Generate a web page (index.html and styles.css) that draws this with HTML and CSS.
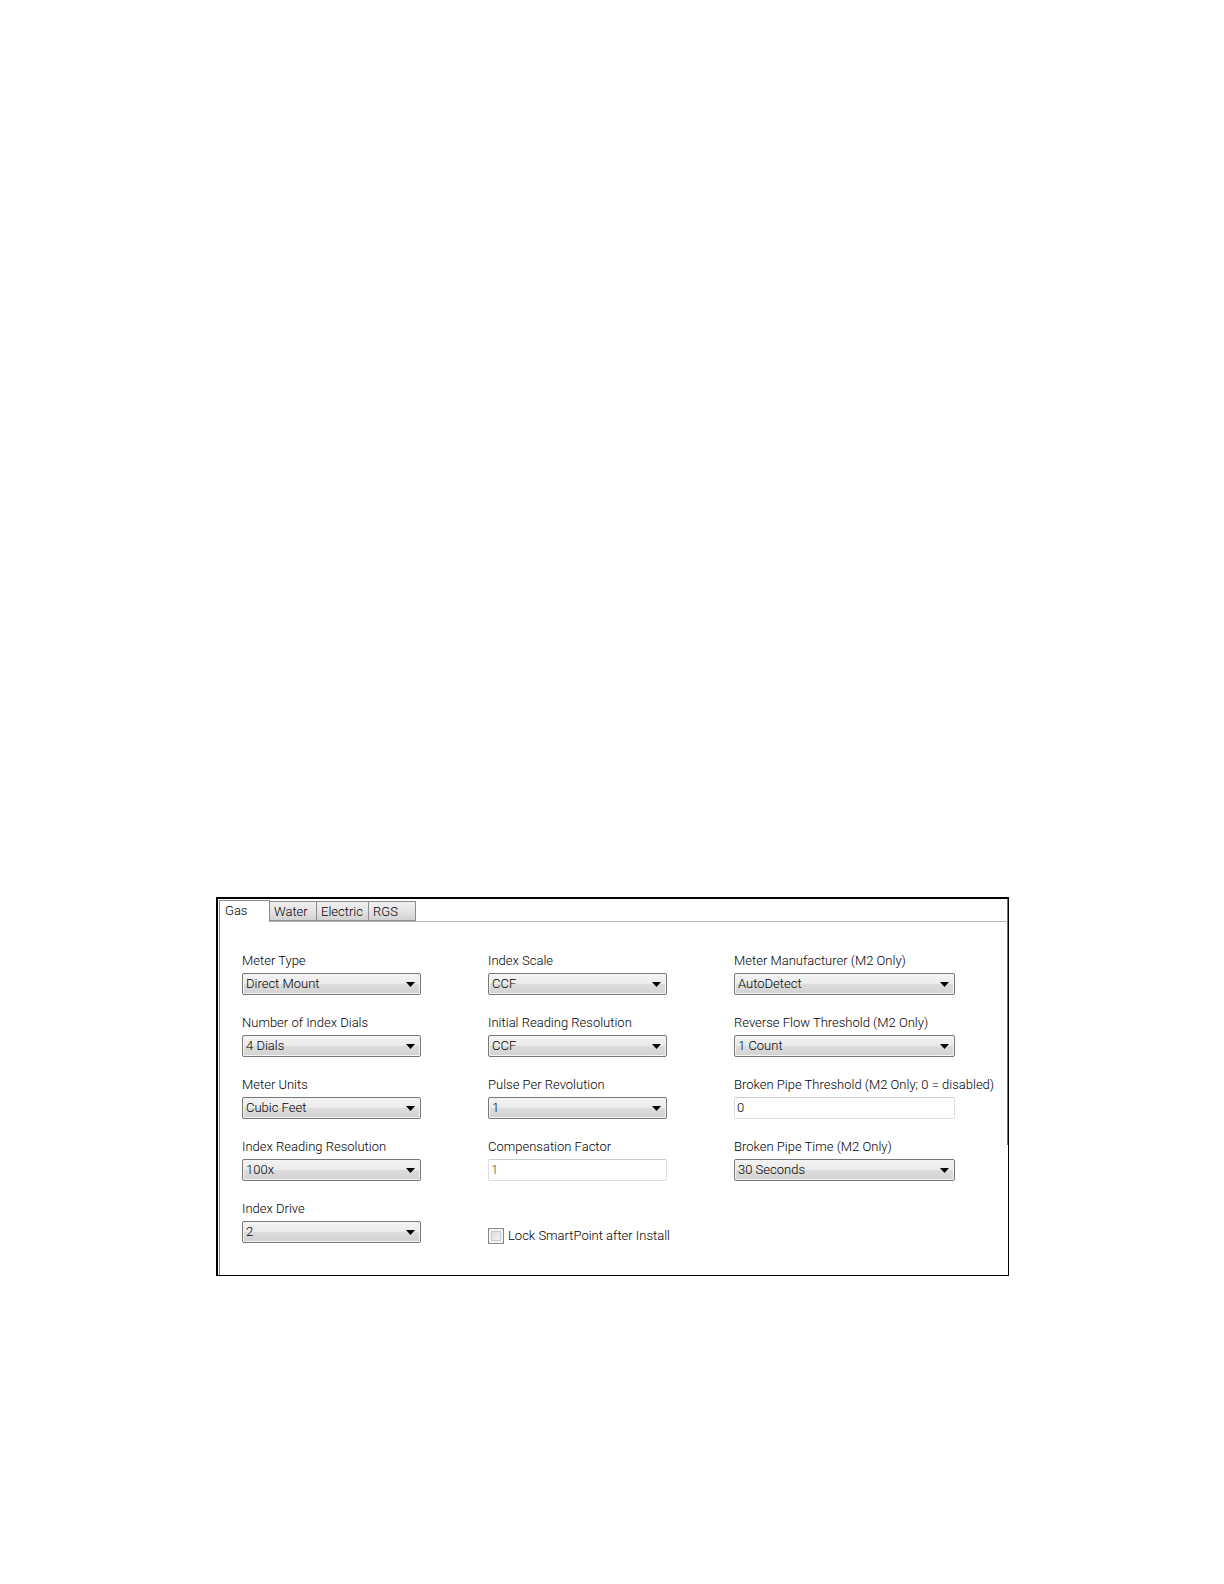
FILE: index.html
```html
<!DOCTYPE html>
<html lang="en">
<head>
<meta charset="utf-8">
<title>Meter Settings</title>
<link rel="stylesheet" href="styles.css">
</head>
<body>
<main class="panel">
  <div class="tabs" role="tablist">
    <button class="tab tab-active" type="button" role="tab" aria-selected="true">Gas</button>
    <button class="tab" type="button" role="tab">Water</button>
    <button class="tab tab-wide" type="button" role="tab">Electric</button>
    <button class="tab" type="button" role="tab">RGS</button>
  </div>
  <form class="form">
    <div class="column">
      <div class="field"><label for="meter-type">Meter Type</label><select id="meter-type"><option>Direct Mount</option></select></div>
      <div class="field"><label for="dials">Number of Index Dials</label><select id="dials"><option>4 Dials</option></select></div>
      <div class="field"><label for="units">Meter Units</label><select id="units"><option>Cubic Feet</option></select></div>
      <div class="field"><label for="reading">Index Reading Resolution</label><select id="reading"><option>100x</option></select></div>
      <div class="field"><label for="drive">Index Drive</label><select id="drive"><option>2</option></select></div>
    </div>
    <div class="column">
      <div class="field"><label for="scale">Index Scale</label><select id="scale"><option>CCF</option></select></div>
      <div class="field"><label for="initial">Initial Reading Resolution</label><select id="initial"><option>CCF</option></select></div>
      <div class="field"><label for="pulse">Pulse Per Revolution</label><select id="pulse"><option>1</option></select></div>
      <div class="field"><label for="factor">Compensation Factor</label><input class="text muted" id="factor" type="text" value="1"></div>
      <div class="check"><input class="box" id="lock" type="checkbox"><label for="lock">Lock SmartPoint after Install</label></div>
    </div>
    <div class="column column-wide">
      <div class="field"><label for="maker">Meter Manufacturer (M2 Only)</label><select id="maker"><option>AutoDetect</option></select></div>
      <div class="field"><label for="reverse">Reverse Flow Threshold (M2 Only)</label><select id="reverse"><option>1 Count</option></select></div>
      <div class="field"><label for="pipe">Broken Pipe Threshold (M2 Only; 0 = disabled)</label><input class="text" id="pipe" type="text" value="0"></div>
      <div class="field"><label for="time">Broken Pipe Time (M2 Only)</label><select id="time"><option>30 Seconds</option></select></div>
    </div>
  </form>
</main>
</body>
</html>
```
FILE: styles.css
```css
* {
  box-sizing: border-box;
}

body {
  margin: 0;
  padding: 897px 215px 64px 216px;
  background: #fff;
  color: #000;
  font-family: Roboto, "Liberation Sans", Arial, sans-serif;
  font-size: 13px;
  font-weight: 300;
  line-height: 20px;
}

.panel {
  padding: 1px 0 0 1px;
  border: solid #000;
  border-width: 2px 1px 1px 2px;
  background: linear-gradient(#777, #777) right top / 1px 246px no-repeat;
}

.tabs {
  display: flex;
  align-items: flex-end;
  height: 22px;
  margin-right: 2px;
  border-bottom: 1px solid #b4b4b4;
}

.tab {
  width: 47px;
  height: 20px;
  padding: 0 0 0 4px;
  border: 1px solid #8c8c8c;
  border-left-width: 0;
  background: linear-gradient(#f0f0f0, #e4e4e4 50%, #d2d2d2);
  color: inherit;
  font: inherit;
  text-align: left;
}

.tab-wide {
  width: 52px;
}

.tab-active {
  width: 51px;
  height: 22px;
  margin-bottom: -1px;
  padding: 0 0 2px 5px;
  border-left-width: 1px;
  border-bottom: 0;
  background: #fff;
}

.form {
  display: grid;
  grid-template-columns: 246fr 246fr 274fr;
  padding: 29px 0 29px 22px;
  border-left: 1px solid #8c8c8c;
}

.column {
  display: flex;
  flex-direction: column;
  gap: 18px;
  min-width: 0;
}

.field {
  display: flex;
  flex-direction: column;
  gap: 2px;
  white-space: nowrap;
}

select,
.text {
  width: 179px;
  height: 22px;
  margin: 0;
  border: 1px solid #777;
  border-radius: 2px;
  color: inherit;
  font: inherit;
}

.column-wide select,
.column-wide .text {
  width: 221px;
}

select {
  appearance: none;
  padding: 0 24px 0 3px;
  background:
    url("data:image/svg+xml,%3Csvg xmlns='http://www.w3.org/2000/svg' width='9' height='5'%3E%3Cpath d='M0 0h9L4.500 5z'/%3E%3C/svg%3E") right 5px center no-repeat,
    linear-gradient(#f3f3f3, #ebebeb 48%, #dcdcdc 52%, #d2d2d2);
  box-shadow: inset 0 0 0 1px #f4f4f4;
}

.text {
  padding: 0 2px 2px;
  border-color: #ccc #ddd #ddd;
  background: #fff;
}

.muted {
  color: #444;
}

.check {
  display: flex;
  align-items: center;
  gap: 4px;
  padding-top: 27px;
  white-space: nowrap;
}

.box {
  appearance: none;
  width: 16px;
  height: 16px;
  margin: 0;
  border: 1px solid #888;
  background: linear-gradient(135deg, #d8d8d8, #f8f8f8);
  box-shadow: inset 0 0 0 2px #f2f2f2, inset 0 0 0 3px #ccc;
}
```
